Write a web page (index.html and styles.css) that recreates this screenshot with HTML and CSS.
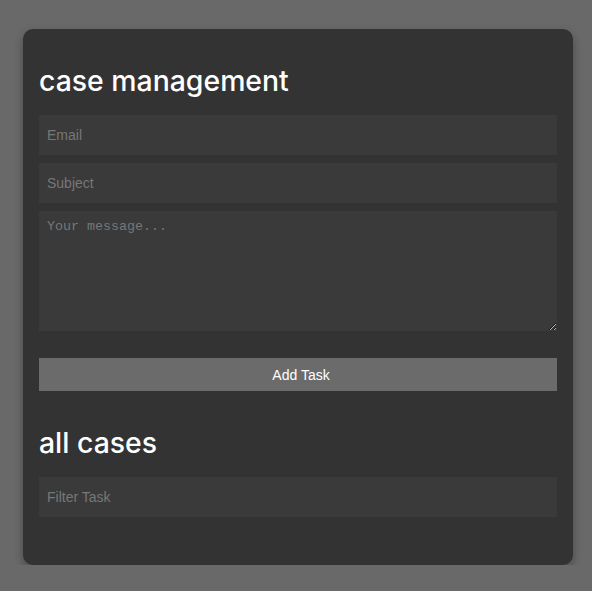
FILE: index.html
```html
<!DOCTYPE html>
<html lang="en">
<head>
    <meta charset="UTF-8">
    <meta name="viewport" content="width=device-width, initial-scale=1.0">
    <title>Case Management</title>
    <link rel="stylesheet" href="styles.css">
</head>
<body>
    <div class="container">
        <h1>case management</h1>
        <form id="taskForm" class="task-form">
            <input type="email" class="field" placeholder="Email">
            <input type="text" class="field" placeholder="Subject">
            <textarea class="field message" placeholder="Your message..."></textarea>
            <button type="submit" class="add-btn">Add Task</button>
        </form>

        <h1>all cases</h1>
        <input type="text" class="field" placeholder="Filter Task">
        <ul class="task-list"></ul>
    </div>
</body>
</html>
```

FILE: styles.css
```css
body {
    font-family: Inter, "Liberation Sans", sans-serif;
    background: #696969;
    margin: 0;
    padding: 29px 0 0 23px;
}

.container {
    box-sizing: border-box;
    width: 550px;
    background: #333;
    padding: 18px 16px 32px;
    border-radius: 10px;
    box-shadow: 0 4px 10px rgba(0, 0, 0, 0.3);
}

h1 {
    color: #fff;
    font-size: 28.4px;
    font-weight: 500;
    line-height: 36px;
    margin: 16px 0 16px;
}

.task-form {
    display: flex;
    flex-direction: column;
    gap: 8px;
}

.field {
    box-sizing: border-box;
    display: block;
    width: 100%;
    height: 40px;
    background: #3a3a3a;
    border: none;
    outline: none;
    padding: 0 8px;
    color: #ddd;
    font-family: "Liberation Sans", Arial, sans-serif;
    font-size: 14px;
}

.field::placeholder {
    color: #777;
}

.message {
    height: 120px;
    padding: 8px;
    font-family: "Liberation Mono", monospace;
    font-size: 13.33px;
    resize: vertical;
}

.add-btn {
    height: 33px;
    margin-top: 19px;
    padding: 0 0 0 6px;
    background: #6b6b6b;
    color: #fff;
    border: none;
    font-family: "Liberation Sans", Arial, sans-serif;
    font-size: 14px;
    cursor: pointer;
}

.container > h1:nth-of-type(2) {
    margin-top: 34px;
}

.task-list {
    list-style: none;
    margin: 16px 0;
    padding: 0;
}
```
